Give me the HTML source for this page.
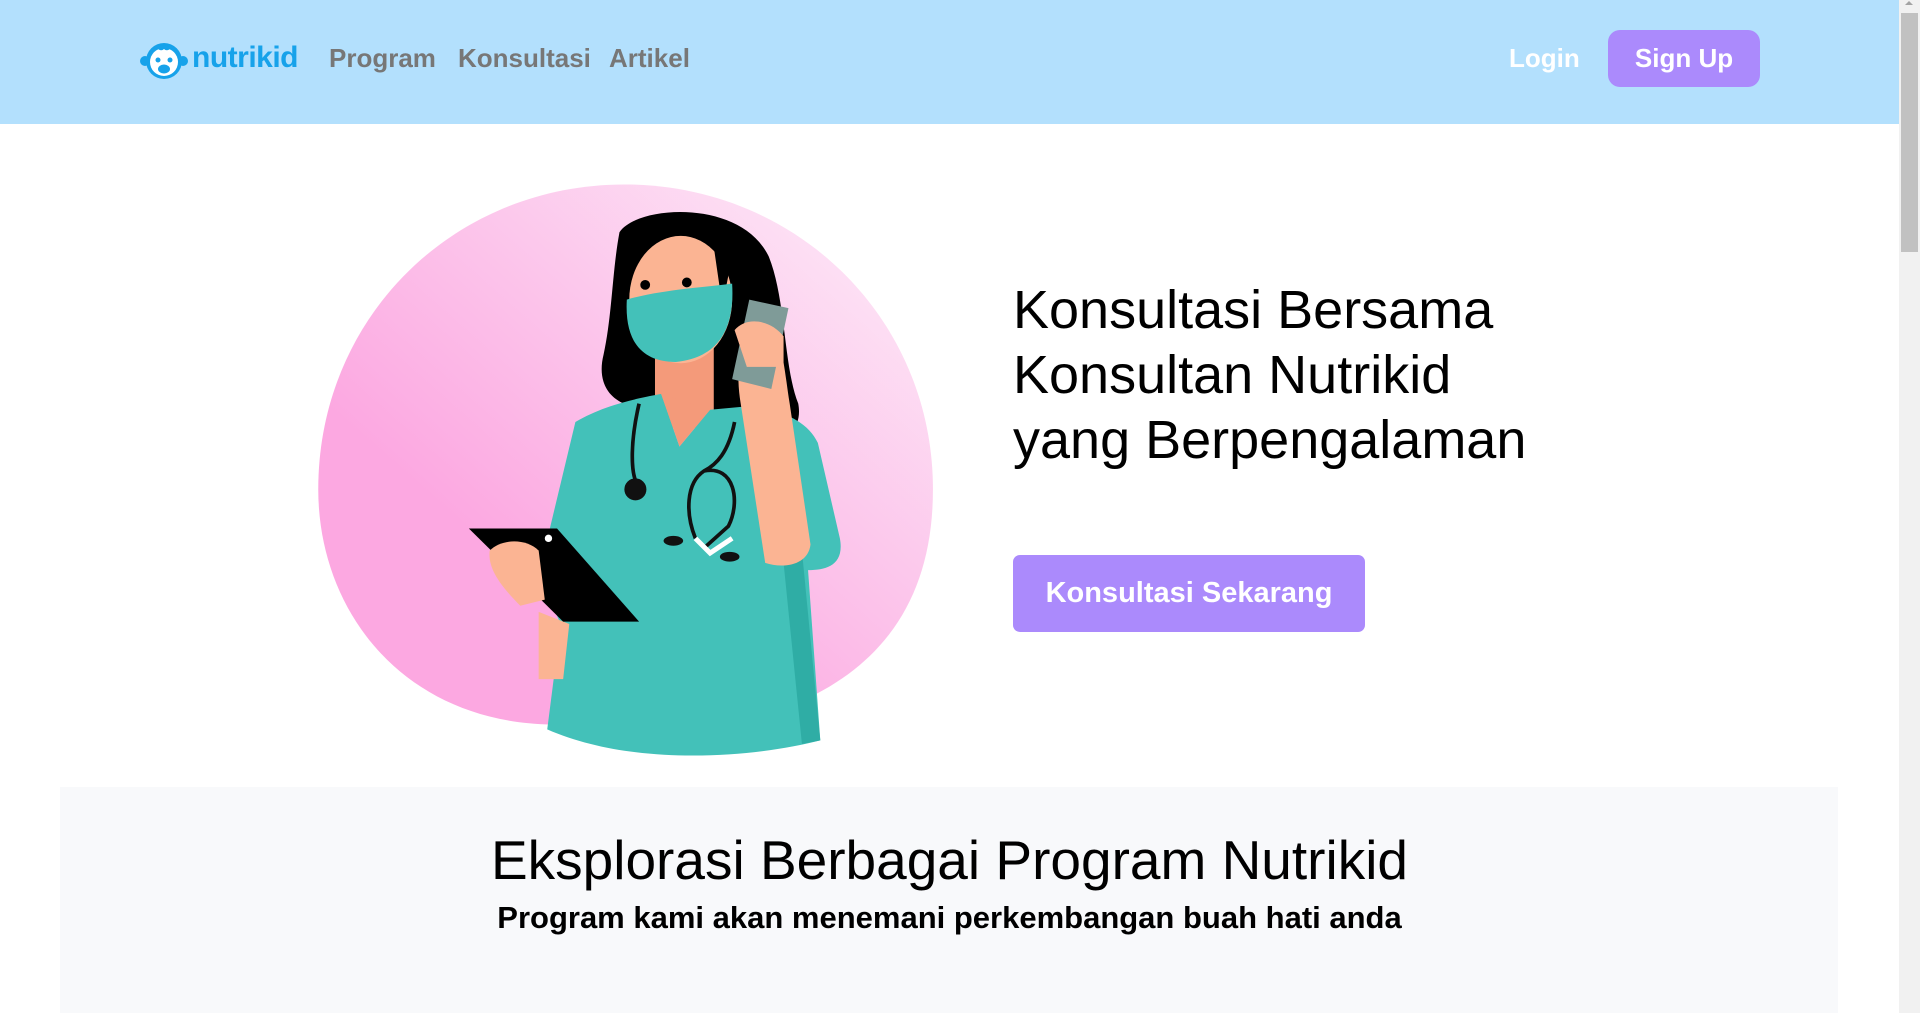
<!DOCTYPE html>
<html><head><meta charset="utf-8">
<style>
*{margin:0;padding:0;box-sizing:border-box}
html,body{width:1920px;height:1013px;overflow:hidden;background:#fff;font-family:"Liberation Sans",sans-serif}
.nav{position:absolute;left:0;top:0;width:1899px;height:124px;background:#b3e0fd}
.logo{position:absolute;left:139px;top:38px;width:50px;height:44px}
.logot{position:absolute;left:192px;top:41px;font-size:30px;font-weight:bold;color:#17a2ea;letter-spacing:-0.5px}
.nl{position:absolute;top:43px;font-size:26px;font-weight:bold;color:#777}
.login{position:absolute;left:1509px;top:43px;font-size:26px;font-weight:bold;color:#fff}
.signup{position:absolute;left:1608px;top:30px;width:152px;height:57px;background:#ab8afc;border-radius:12px;color:#fff;font-size:26px;font-weight:bold;text-align:center;line-height:57px}
.sb{position:absolute;left:1899px;top:0;width:21px;height:1013px;background:#f1f1f1}
.sbt{position:absolute;left:2px;top:13px;width:17px;height:239px;background:#c1c1c1}
.arr{position:absolute;left:6px;top:1px;width:0;height:0;border-left:4px solid transparent;border-right:4px solid transparent;border-bottom:4px solid #a3a3a3}
h1{position:absolute;left:1013px;top:278px;font-size:54px;font-weight:normal;line-height:65px;color:#000}
.cta{position:absolute;left:1013px;top:555px;width:352px;height:77px;background:#ab8afc;border-radius:7px;color:#fff;font-size:29px;font-weight:bold;text-align:center;line-height:77px}
.sec{position:absolute;left:60px;top:787px;width:1778px;height:226px;background:#f8f9fb}
.h2{position:absolute;left:0;width:1899px;top:828px;text-align:center;font-size:55px;color:#000}
.sub{position:absolute;left:0;width:1899px;top:900px;text-align:center;font-size:31px;font-weight:bold;color:#000}
</style></head><body>
<div class="nav">
<svg class="logo" viewBox="0 0 50 44">
<circle cx="25" cy="23" r="18" fill="#17a2ea"/>
<circle cx="6" cy="23" r="5" fill="#17a2ea"/><circle cx="44" cy="23" r="5" fill="#17a2ea"/>
<circle cx="25" cy="24" r="14" fill="#fff"/>
<path d="M18 10 Q25 4 32 10 Q28 14 25 11 Q22 14 18 10Z" fill="#17a2ea"/>
<circle cx="19" cy="22" r="2.5" fill="#17a2ea"/><circle cx="31" cy="22" r="2.5" fill="#17a2ea"/>
<ellipse cx="25" cy="31" rx="6" ry="4.5" fill="#17a2ea"/>
</svg>
<div class="logot">nutrikid</div>
<div class="nl" style="left:329px">Program</div>
<div class="nl" style="left:458px">Konsultasi</div>
<div class="nl" style="left:609px">Artikel</div>
<div class="login">Login</div>
<div class="signup">Sign Up</div>
</div>
<div class="sb"><div class="arr"></div><div class="sbt"></div></div>

<svg style="position:absolute;left:306px;top:171px" width="649" height="600" viewBox="250 140 530 490">
<defs><linearGradient id="g" x1="0" y1="1" x2="1" y2="0"><stop offset="0.3" stop-color="#fca8e1"/><stop offset="1" stop-color="#fdeef9"/></linearGradient></defs>
<path d="M510,151 C650,151 762,260 762,400 C762,490 720,545 650,575 L450,592 C330,590 260,500 260,400 C260,260 370,151 510,151Z" fill="url(#g)"/>
<path d="M506,190 C520,168 605,162 628,210 C642,245 640,300 652,330 C656,352 640,362 620,356 L515,332 C495,326 488,310 493,290 C500,258 500,222 506,190Z" fill="#000"/>
<rect x="535" y="280" width="48" height="70" fill="#f49a7a"/>
<ellipse cx="556" cy="245" rx="42" ry="52" fill="#fbb493"/>
<path d="M512,205 C530,188 570,185 582,195 L590,250 L600,200 C605,185 520,180 510,200Z" fill="#000"/>
<circle cx="527" cy="233" r="4" fill="#000"/><circle cx="561" cy="231" r="4" fill="#000"/>
<path d="M512,245 C540,237 575,235 598,232 C600,265 590,292 552,296 C525,296 510,280 512,245Z" fill="#43c1b9"/>
<path d="M470,345 C495,330 525,325 540,322 L555,365 L580,335 L612,332 C640,335 660,345 668,362 L686,440 C690,462 675,466 660,466 L670,605 C620,618 520,628 447,596 L458,510 L440,470 Z" fill="#43c1b9"/>
<path d="M655,450 L670,605 L655,608 L640,460Z" fill="#2fada5"/>
<path d="M540,322 L555,365 L580,335 Z" fill="#f49a7a"/>
<path d="M605,330 C600,300 605,275 620,262 C640,270 640,300 645,330 L662,445 C660,462 640,465 625,460 Z" fill="#fbb493"/>
<path d="M612,245 L644,252 L630,318 L598,310Z" fill="#7f9b98"/>
<path d="M600,270 C610,258 630,262 640,275 L640,300 L610,300Z" fill="#fbb493"/>
<path d="M440,500 L465,510 L460,555 L440,555Z" fill="#fbb493"/>
<path d="M383,432 L455,432 L522,508 L460,508Z" fill="#000"/>
<circle cx="448" cy="440" r="3" fill="#fff"/>
<path d="M400,450 C410,440 430,440 440,450 L445,490 L425,495 C410,480 398,465 400,450Z" fill="#fbb493"/>
<path d="M522,330 C515,360 515,385 520,395 M600,345 C595,370 585,380 575,385 C560,395 560,420 568,440 M575,385 C600,380 605,410 595,430 L575,448" stroke="#111" stroke-width="3" fill="none"/>
<circle cx="519" cy="400" r="9" fill="#111"/>
<path d="M568,440 L580,452 L598,440" stroke="#fff" stroke-width="4" fill="none"/>
<ellipse cx="550" cy="442" rx="8" ry="4" fill="#111"/><ellipse cx="596" cy="455" rx="8" ry="4" fill="#111"/>
</svg>

<h1>Konsultasi Bersama<br>Konsultan Nutrikid<br>yang Berpengalaman</h1>
<div class="cta">Konsultasi Sekarang</div>
<div class="sec"></div>
<div class="h2">Eksplorasi Berbagai Program Nutrikid</div>
<div class="sub">Program kami akan menemani perkembangan buah hati anda</div>
</body></html>
